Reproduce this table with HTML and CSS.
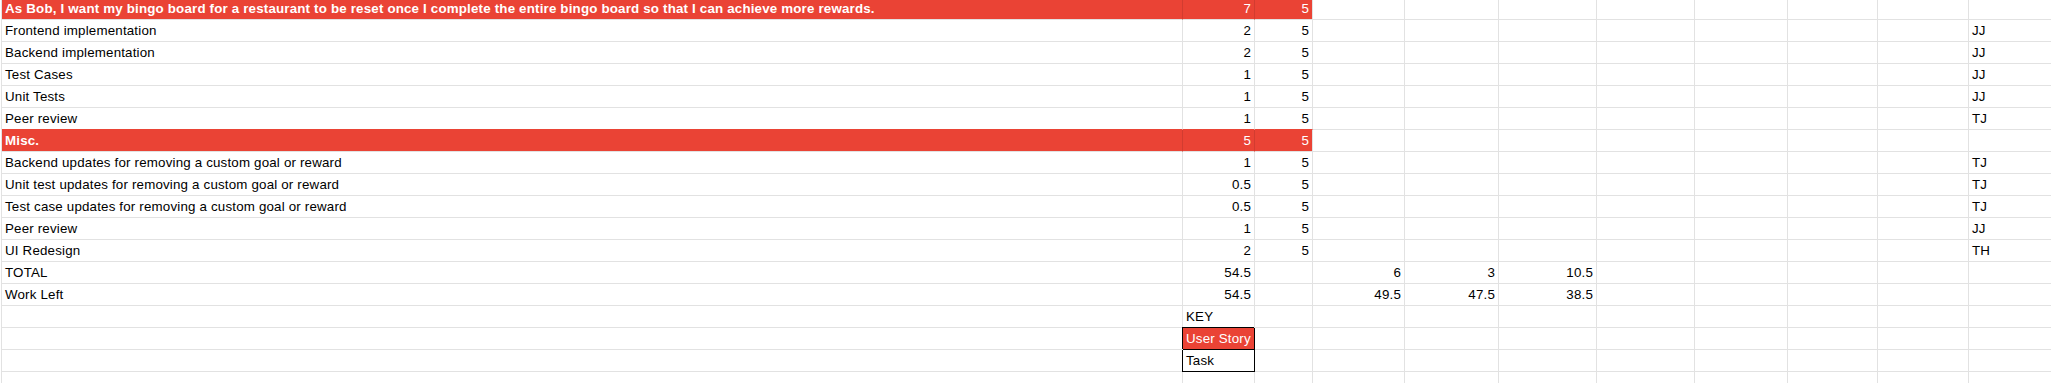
FILE: index.html
```html
<!DOCTYPE html>
<html lang="en">
<head>
<meta charset="utf-8">
<title>Sprint Backlog</title>
<link rel="stylesheet" href="styles.css">
</head>
<body>
<div class="sheet">
  <div class="row story">
    <div class="c t">As Bob, I want my bingo board for a restaurant to be reset once I complete the entire bingo board so that I can achieve more rewards.</div><div class="c n">7</div><div class="c n">5</div>
    <div class="c"></div><div class="c"></div><div class="c"></div><div class="c"></div><div class="c"></div><div class="c"></div><div class="c"></div><div class="c"></div>
  </div>
  <div class="row">
    <div class="c">Frontend implementation</div><div class="c n">2</div><div class="c n">5</div>
    <div class="c"></div><div class="c"></div><div class="c"></div><div class="c"></div><div class="c"></div><div class="c"></div><div class="c"></div><div class="c">JJ</div>
  </div>
  <div class="row">
    <div class="c">Backend implementation</div><div class="c n">2</div><div class="c n">5</div>
    <div class="c"></div><div class="c"></div><div class="c"></div><div class="c"></div><div class="c"></div><div class="c"></div><div class="c"></div><div class="c">JJ</div>
  </div>
  <div class="row">
    <div class="c">Test Cases</div><div class="c n">1</div><div class="c n">5</div>
    <div class="c"></div><div class="c"></div><div class="c"></div><div class="c"></div><div class="c"></div><div class="c"></div><div class="c"></div><div class="c">JJ</div>
  </div>
  <div class="row">
    <div class="c">Unit Tests</div><div class="c n">1</div><div class="c n">5</div>
    <div class="c"></div><div class="c"></div><div class="c"></div><div class="c"></div><div class="c"></div><div class="c"></div><div class="c"></div><div class="c">JJ</div>
  </div>
  <div class="row above">
    <div class="c">Peer review</div><div class="c n">1</div><div class="c n">5</div>
    <div class="c"></div><div class="c"></div><div class="c"></div><div class="c"></div><div class="c"></div><div class="c"></div><div class="c"></div><div class="c">TJ</div>
  </div>
  <div class="row story">
    <div class="c t">Misc.</div><div class="c n">5</div><div class="c n">5</div>
    <div class="c"></div><div class="c"></div><div class="c"></div><div class="c"></div><div class="c"></div><div class="c"></div><div class="c"></div><div class="c"></div>
  </div>
  <div class="row">
    <div class="c">Backend updates for removing a custom goal or reward</div><div class="c n">1</div><div class="c n">5</div>
    <div class="c"></div><div class="c"></div><div class="c"></div><div class="c"></div><div class="c"></div><div class="c"></div><div class="c"></div><div class="c">TJ</div>
  </div>
  <div class="row">
    <div class="c">Unit test updates for removing a custom goal or reward</div><div class="c n">0.5</div><div class="c n">5</div>
    <div class="c"></div><div class="c"></div><div class="c"></div><div class="c"></div><div class="c"></div><div class="c"></div><div class="c"></div><div class="c">TJ</div>
  </div>
  <div class="row">
    <div class="c">Test case updates for removing a custom goal or reward</div><div class="c n">0.5</div><div class="c n">5</div>
    <div class="c"></div><div class="c"></div><div class="c"></div><div class="c"></div><div class="c"></div><div class="c"></div><div class="c"></div><div class="c">TJ</div>
  </div>
  <div class="row">
    <div class="c">Peer review</div><div class="c n">1</div><div class="c n">5</div>
    <div class="c"></div><div class="c"></div><div class="c"></div><div class="c"></div><div class="c"></div><div class="c"></div><div class="c"></div><div class="c">JJ</div>
  </div>
  <div class="row">
    <div class="c">UI Redesign</div><div class="c n">2</div><div class="c n">5</div>
    <div class="c"></div><div class="c"></div><div class="c"></div><div class="c"></div><div class="c"></div><div class="c"></div><div class="c"></div><div class="c">TH</div>
  </div>
  <div class="row">
    <div class="c">TOTAL</div><div class="c n">54.5</div><div class="c"></div>
    <div class="c n">6</div><div class="c n">3</div><div class="c n">10.5</div><div class="c"></div><div class="c"></div><div class="c"></div><div class="c"></div><div class="c"></div>
  </div>
  <div class="row">
    <div class="c">Work Left</div><div class="c n">54.5</div><div class="c"></div>
    <div class="c n">49.5</div><div class="c n">47.5</div><div class="c n">38.5</div><div class="c"></div><div class="c"></div><div class="c"></div><div class="c"></div><div class="c"></div>
  </div>
  <div class="row">
    <div class="c"></div><div class="c">KEY</div><div class="c"></div>
    <div class="c"></div><div class="c"></div><div class="c"></div><div class="c"></div><div class="c"></div><div class="c"></div><div class="c"></div><div class="c"></div>
  </div>
  <div class="row">
    <div class="c"></div><div class="c key-story">User Story</div><div class="c"></div>
    <div class="c"></div><div class="c"></div><div class="c"></div><div class="c"></div><div class="c"></div><div class="c"></div><div class="c"></div><div class="c"></div>
  </div>
  <div class="row">
    <div class="c"></div><div class="c key-task">Task</div><div class="c"></div>
    <div class="c"></div><div class="c"></div><div class="c"></div><div class="c"></div><div class="c"></div><div class="c"></div><div class="c"></div><div class="c"></div>
  </div>
  <div class="row">
    <div class="c"></div><div class="c"></div><div class="c"></div>
    <div class="c"></div><div class="c"></div><div class="c"></div><div class="c"></div><div class="c"></div><div class="c"></div><div class="c"></div><div class="c"></div>
  </div>
</div>
</body>
</html>
```

FILE: styles.css
```css
html, body {
  margin: 0;
  padding: 0;
  background: #fff;
  overflow: hidden;
}

body {
  width: 2051px;
  height: 383px;
  font-family: "Liberation Sans", Arial, sans-serif;
  font-size: 13.333px;
  letter-spacing: 0.18px;
  color: #000;
}

.sheet {
  width: max-content;
  margin-top: -2px;
  margin-left: 1px;
  border-left: 1px solid #e2e2e2;
}

.row {
  display: grid;
  grid-template-columns: 1181px 72px 58px 92px 94px 98px 98px 93px 90px 91px 120px;
}

.c {
  box-sizing: border-box;
  height: 22px;
  padding: 1px 3px 0;
  line-height: 20px;
  border-right: 1px solid #e2e2e2;
  border-bottom: 1px solid #e2e2e2;
  white-space: nowrap;
  overflow: hidden;
}

.n {
  text-align: right;
}

.story .c:nth-child(-n+3) {
  background: #ea4335;
  color: #fff;
}

.story .c:nth-child(-n+2) {
  border-right-color: #d23c30;
}

.story .t {
  font-weight: bold;
}

.above .c:nth-child(-n+3) {
  border-bottom-color: #ea4335;
}

.key-story {
  background: #ea4335;
  color: #fff;
  border-right-color: #000;
  border-bottom-color: #000;
  box-shadow: -1px -1px 0 #000;
}

.key-task {
  border-right-color: #000;
  border-bottom-color: #000;
  box-shadow: -1px 0 0 #000;
}
```
